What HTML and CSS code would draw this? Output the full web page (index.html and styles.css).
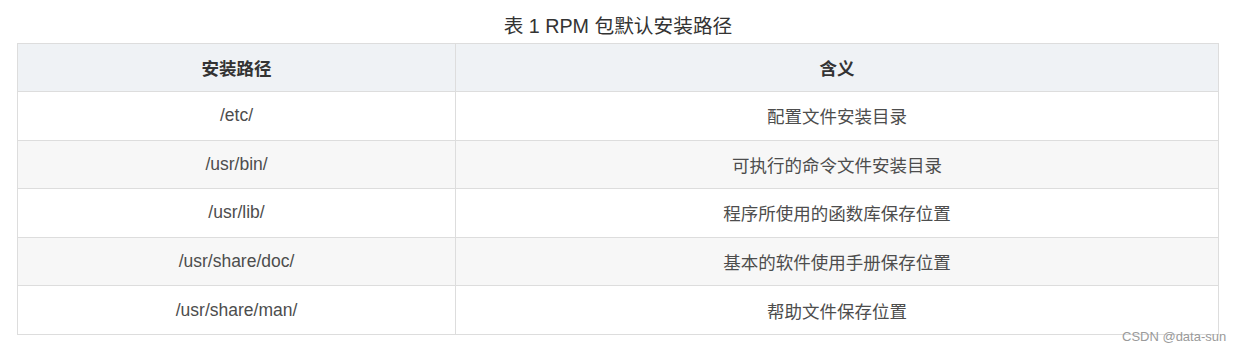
FILE: index.html
```html
<!DOCTYPE html>
<html lang="zh">
<head>
<meta charset="utf-8">
<title>表 1 RPM 包默认安装路径</title>
<link rel="stylesheet" href="styles.css">
</head>
<body>
<div class="page">
  <table class="rpm-table">
    <caption class="rpm-caption">表 1 RPM 包默认安装路径</caption>
    <thead>
      <tr><th class="col-path">安装路径</th><th>含义</th></tr>
    </thead>
    <tbody>
      <tr><td>/etc/</td><td>配置文件安装目录</td></tr>
      <tr><td>/usr/bin/</td><td>可执行的命令文件安装目录</td></tr>
      <tr><td>/usr/lib/</td><td>程序所使用的函数库保存位置</td></tr>
      <tr><td>/usr/share/doc/</td><td>基本的软件使用手册保存位置</td></tr>
      <tr><td>/usr/share/man/</td><td>帮助文件保存位置</td></tr>
    </tbody>
  </table>
  <div class="watermark">CSDN @data-sun</div>
</div>
</body>
</html>
```
FILE: styles.css
```css
html, body {
  margin: 0;
  padding: 0;
  background: #ffffff;
}
body {
  font-family: "Liberation Sans", "Noto Sans CJK SC", sans-serif;
  color: #4d4d4d;
}
.page {
  position: relative;
  width: 1242px;
  height: 351px;
  padding-left: 17px;
  box-sizing: border-box;
}
.rpm-table {
  width: 1202px;
  border-collapse: collapse;
  table-layout: fixed;
}
.rpm-caption {
  font-size: 19.7px;
  line-height: 26px;
  color: #333333;
  padding: 13px 0 4px;
  text-align: center;
}
.rpm-table th,
.rpm-table td {
  border: 1px solid #dddddd;
  text-align: center;
  vertical-align: middle;
  padding: 0;
  font-size: 17.5px;
}
.rpm-table th {
  height: 47px;
  background: #eff2f5;
  color: #333333;
  font-weight: bold;
}
.rpm-table .col-path {
  width: 437px;
}
.rpm-table td {
  height: 47.6px;
  color: #4d4d4d;
}
.rpm-table tbody tr:nth-child(even) td {
  background: #f7f7f7;
}
.watermark {
  position: absolute;
  left: 1122px;
  top: 329px;
  font-size: 13px;
  line-height: 16px;
  color: #9a9a9a;
  white-space: nowrap;
}
```
